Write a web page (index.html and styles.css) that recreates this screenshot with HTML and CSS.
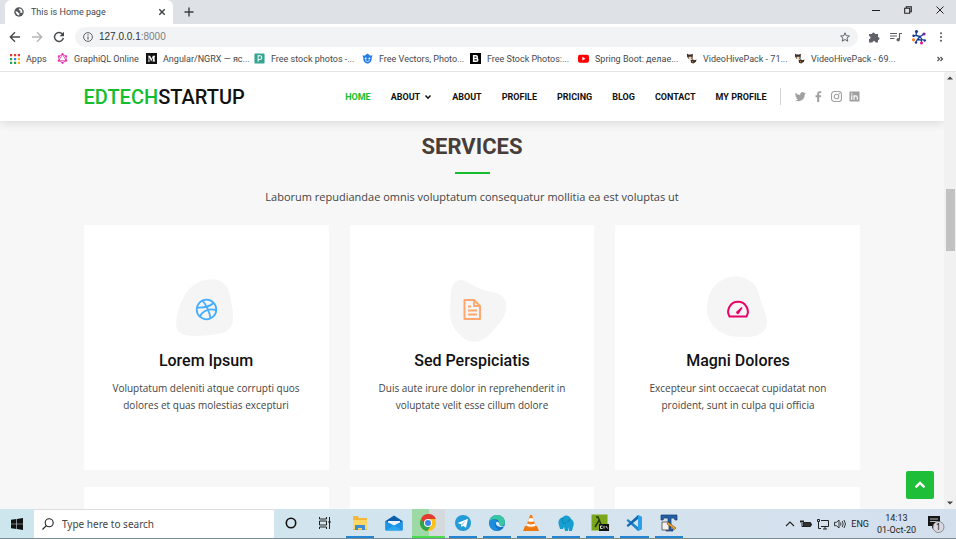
FILE: index.html
```html
<!DOCTYPE html>
<html lang="en">
<head>
<meta charset="utf-8">
<title>This is Home page</title>
<link rel="stylesheet" href="styles.css">
</head>
<body>
<div class="browser">
  <div class="tabstrip">
    <div class="tab">
      <svg class="i10" viewBox="0 0 20 20"><circle cx="10" cy="10" r="9.500" fill="#54585c"/><path d="M3 8l5 2 1 2 2 1-1 4-3-1-3-4zM11 3l-2 3 3 1 1 2-1 2 4 1 1-1-1-5-2-2z" fill="#fff"/></svg>
      <span class="tab-title">This is Home page</span>
      <button class="plain" aria-label="Close tab"><svg class="i8" viewBox="0 0 8 8"><path d="M1.300 1.300l5.400 5.400M6.700 1.300L1.300 6.700" stroke="#3c4043" stroke-width="1.400"/></svg></button>
    </div>
    <button class="plain newtab" aria-label="New tab"><svg class="i10" viewBox="0 0 10 10"><path d="M5 .5v9M.5 5h9" stroke="#3c4043" stroke-width="1.400"/></svg></button>
    <div class="window-buttons">
      <button class="plain" aria-label="Minimize"><svg class="i8" viewBox="0 0 8 8"><path d="M0 4.500h8" stroke="#222"/></svg></button>
      <button class="plain" aria-label="Restore"><svg class="i8" viewBox="0 0 8 8"><path d="M.7 2.300h5v5h-5zM2.300 2V.7h5v5H6" fill="none" stroke="#222" stroke-width="1.100"/></svg></button>
      <button class="plain" aria-label="Close"><svg class="i8" viewBox="0 0 8 8"><path d="M.5.5l7 7M7.500.5l-7 7" stroke="#222"/></svg></button>
    </div>
  </div>
  <div class="toolbar">
    <button class="plain" aria-label="Back"><svg class="i12" viewBox="0 0 12 12"><path d="M11 6H1.500M6 1.300L1.300 6 6 10.700" fill="none" stroke="#45484b" stroke-width="1.400"/></svg></button>
    <button class="plain" aria-label="Forward"><svg class="i12" viewBox="0 0 12 12"><path d="M1 6h9.500M6 1.300L10.700 6 6 10.700" fill="none" stroke="#b4b6b9" stroke-width="1.400"/></svg></button>
    <button class="plain" aria-label="Reload"><svg class="i12" viewBox="0 0 12 12"><path d="M9.800 3.500A4.500 4.500 0 1 0 10.400 7" fill="none" stroke="#45484b" stroke-width="1.400"/><path d="M11 .8v4.400H6.600z" fill="#45484b"/></svg></button>
    <div class="omnibox">
      <svg class="i10" viewBox="0 0 10 10"><circle cx="5" cy="5" r="4.400" fill="none" stroke="#5f6368"/><path d="M5 4.500v3M5 2.300v1.200" stroke="#5f6368" stroke-width="1.200"/></svg>
      <span class="url">127.0.0.1<span class="port">:8000</span></span>
      <button class="plain" aria-label="Bookmark"><svg class="i10" viewBox="0 0 10 10"><path d="M5 .8l1.200 2.900 3.200.3L7 6.100l.8 3.100L5 7.500 2.200 9.200 3 6.100.6 4l3.200-.3z" fill="none" stroke="#505458" stroke-width=".9"/></svg></button>
    </div>
    <div class="extensions">
      <svg class="i12" viewBox="0 0 12 12"><path d="M1 3h3a1.500 1.500 0 1 1 3 0h3v3a1.500 1.500 0 1 1 0 3v2.500H7.500a1.500 1.500 0 0 0-3 0H1V8a1.500 1.500 0 0 0 0-3z" fill="#5f6368"/></svg>
      <svg class="i12" viewBox="0 0 12 12"><path d="M0 2.500h7M0 5h7M0 7.500h4.500M9.500 8.500V2.500H12" fill="none" stroke="#5f6368" stroke-width="1.200"/><circle cx="8.200" cy="8.800" r="1.700" fill="#5f6368"/></svg>
      <svg class="i14" viewBox="0 0 14 14"><path d="M4.500 1.500L4 5.500 1 6M4 5.500l4 1 2.500-1.500 1-1M8 6.500L5.500 9.500 4 12M8 6.500l2 3 3 1M5.500 9.500l4 .5v3" fill="none" stroke="#173c93" stroke-width="1.300"/><g fill="#173c93"><circle cx="4.500" cy="1.500" r="1.600"/><circle cx="1.500" cy="5.800" r="1.200"/><circle cx="12.800" cy="10.500" r="1.200"/><circle cx="4" cy="12.500" r="1.200"/></g><circle cx="12" cy="4" r="1.600" fill="#7527a2"/><circle cx="1.500" cy="9.800" r="1.600" fill="#ff7a1a"/><circle cx="9.500" cy="13" r="1.500" fill="#f0148c"/></svg>
      <svg class="i10" viewBox="0 0 10 10" fill="#505458"><circle cx="5" cy="1.200" r="1"/><circle cx="5" cy="5" r="1"/><circle cx="5" cy="8.800" r="1"/></svg>
    </div>
  </div>
  <nav class="bookmarks">
    <a href="#" class="bm apps"><svg class="i10" viewBox="0 0 10 10"><path d="M0 0h2.200v2.200H0zM4 0h2.200v2.200H4zM7.800 0H10v2.200H7.800z" fill="#e53930"/><path d="M0 4h2.200v2.200H0z" fill="#25a451"/><path d="M4 4h2.200v2.200H4z" fill="#3480ee"/><path d="M7.800 4H10v2.200H7.800zM7.800 7.800H10V10H7.800z" fill="#f9b316"/><path d="M0 7.800h2.200V10H0zM4 7.800h2.200V10H4z" fill="#25a451"/></svg><span>Apps</span></a>
    <a href="#" class="bm first"><svg class="i11" viewBox="0 0 12 12"><path d="M6 1.300l4 2.300v4.800l-4 2.300-4-2.300V3.600zM6 1.300L2 8.400h8z" fill="none" stroke="#e535ab" stroke-width=".9"/><g fill="#e535ab"><circle cx="6" cy="1.300" r="1.200"/><circle cx="10" cy="3.600" r="1.200"/><circle cx="10" cy="8.400" r="1.200"/><circle cx="6" cy="10.700" r="1.200"/><circle cx="2" cy="8.400" r="1.200"/><circle cx="2" cy="3.600" r="1.200"/></g></svg><span>GraphiQL Online</span></a>
    <a href="#" class="bm"><svg class="i11" viewBox="0 0 12 12"><path d="M0 0h12v12H0z" fill="#111"/><path d="M2 3h2.500L6 6.300 7.500 3H10v.7l-.6.5v4l.6.5v.5H7v-.5l.6-.5V5L5.800 9.200 3.600 5v3l.9 1v.3H2V9l.8-1V4z" fill="#fff"/></svg><span>Angular/NGRX — яс...</span></a>
    <a href="#" class="bm"><svg class="i11" viewBox="0 0 12 12"><rect x=".5" y=".5" width="11" height="11" rx="1" fill="#35a593"/><path d="M4.500 9.500V3h2a2 2 0 0 1 0 4h-2" fill="none" stroke="#fff" stroke-width="1.100"/></svg><span>Free stock photos -...</span></a>
    <a href="#" class="bm"><svg class="i11" viewBox="0 0 12 12"><path d="M.5 2.500l2.300.5L6 .5 9.200 3l2.300-.5-1 3C11 9 8.500 11.500 6 11.500S1 9 1.500 5.500z" fill="#247ce8"/><circle cx="4" cy="6" r="1" fill="#fff"/><circle cx="8" cy="6" r="1" fill="#fff"/><path d="M3.500 8.300q2.500 1.800 5 0" fill="none" stroke="#fff" stroke-width=".8"/></svg><span>Free Vectors, Photo...</span></a>
    <a href="#" class="bm"><svg class="i11" viewBox="0 0 12 12"><path d="M0 0h12v12H0z" fill="#000"/><path d="M4 6h2.500a1.500 1.500 0 0 0 0-3H4v6h3a1.500 1.500 0 0 0 0-3" fill="none" stroke="#fff" stroke-width="1.700"/></svg><span>Free Stock Photos:...</span></a>
    <a href="#" class="bm"><svg class="i11" viewBox="0 0 12 12"><rect x="0" y="2" width="12" height="8.500" rx="2" fill="#f00"/><path d="M4.700 4.200v4l3.500-2z" fill="#fff"/></svg><span>Spring Boot: делае...</span></a>
    <a href="#" class="bm"><svg class="i11" viewBox="0 0 12 12"><path d="M1 .5l1.500 1.200h3L7.500.8 7.300 4 7 6.500H3L1.200 4z" fill="#3b2d27"/><path d="M2.800 4.200h3.400L5.800 6.600 4.300 7.500 3 6.200z" fill="#f1d3b4"/><path d="M5 7.500l2.500-.8L9 8l2.500-1-.7 2.500L8 11.500 5.500 10.500z" fill="#3b2d27"/><path d="M6.500 9l1.500 1.200" stroke="#dc962e"/></svg><span>VideoHivePack - 71...</span></a>
    <a href="#" class="bm"><svg class="i11" viewBox="0 0 12 12"><path d="M1 .5l1.500 1.200h3L7.500.8 7.300 4 7 6.500H3L1.200 4z" fill="#3b2d27"/><path d="M2.800 4.200h3.400L5.800 6.600 4.300 7.500 3 6.200z" fill="#f1d3b4"/><path d="M5 7.500l2.500-.8L9 8l2.500-1-.7 2.500L8 11.500 5.500 10.500z" fill="#3b2d27"/><path d="M6.500 9l1.500 1.200" stroke="#dc962e"/></svg><span>VideoHivePack - 69...</span></a>
    <button class="plain more" aria-label="More bookmarks"><svg class="i8" viewBox="0 0 8 8"><path d="M1.500 2L3.500 4 1.500 6M4.500 2L6.500 4 4.500 6" fill="none" stroke="#45484b" stroke-width="1.100"/></svg></button>
  </nav>
</div>

<div class="viewport">
  <div class="page">
    <header class="site-header">
      <div class="container header-row">
        <a href="#" class="logo"><span class="green">EDTECH</span>STARTUP</a>
        <nav class="menu">
          <a href="#" class="green">HOME</a>
          <a href="#" class="drop">ABOUT <svg class="i8" viewBox="0 0 8 8"><path d="M1.500 2.500L4 5.200l2.500-2.700" fill="none" stroke="#111" stroke-width="1.500"/></svg></a>
          <a href="#">ABOUT</a>
          <a href="#">PROFILE</a>
          <a href="#">PRICING</a>
          <a href="#">BLOG</a>
          <a href="#">CONTACT</a>
          <a href="#">MY PROFILE</a>
        </nav>
        <div class="social">
          <a href="#" aria-label="Twitter"><svg class="i11" viewBox="0 0 24 24"><path d="M23.600 4.900a9.700 9.700 0 0 1-2.800.8 4.900 4.900 0 0 0 2.100-2.700 9.700 9.700 0 0 1-3.100 1.200 4.900 4.900 0 0 0-8.400 4.500A13.900 13.900 0 0 1 1.300 3.600a4.900 4.900 0 0 0 1.500 6.500 4.900 4.900 0 0 1-2.200-.6 4.900 4.900 0 0 0 3.900 4.900 4.900 4.900 0 0 1-2.200.1 4.900 4.900 0 0 0 4.600 3.400A9.800 9.800 0 0 1 0 19.900a13.800 13.800 0 0 0 21.200-12.300 10 10 0 0 0 2.400-2.700z" fill="#a0a0a0"/></svg></a>
          <a href="#" aria-label="Facebook"><svg class="i11" viewBox="0 0 24 24"><path d="M9 24V13.500H5.500v-4H9V6.300C9 2.500 11.300.5 14.600.5c1.500 0 2.900.2 3.400.3v3.800h-2.300c-1.800 0-2.200.9-2.200 2.200v2.700h4.200l-.6 4h-3.600V24z" fill="#a0a0a0"/></svg></a>
          <a href="#" aria-label="Instagram"><svg class="i11" viewBox="0 0 24 24"><rect x="1.200" y="1.200" width="21.600" height="21.600" rx="6" fill="none" stroke="#a0a0a0" stroke-width="2.400"/><circle cx="12" cy="12" r="5" fill="none" stroke="#a0a0a0" stroke-width="2.400"/><circle cx="18.200" cy="5.800" r="1.500" fill="#a0a0a0"/></svg></a>
          <a href="#" aria-label="LinkedIn"><svg class="i11" viewBox="0 0 24 24"><rect x="1" y="1" width="22" height="22" rx="2" fill="#a0a0a0"/><path d="M6 9.500V19M6 5v2.500M11 19V9.500M11 14c0-4.500 7-4.500 7 0v5" fill="none" stroke="#fff" stroke-width="2.600"/></svg></a>
        </div>
      </div>
    </header>
    <main class="container services">
      <h2>SERVICES</h2>
      <p class="lead">Laborum repudiandae omnis voluptatum consequatur mollitia ea est voluptas ut</p>
      <div class="cards">
        <article class="card">
          <svg class="blob" viewBox="1 0 90 80"><path d="M39 12C50 7 65 8 69 22c2 12 5 18 4 28-1 11-10 14-22 15-12 1-24 2-31-2-6-5-4-15-1-25 4-11 9-21 20-26z" fill="#f5f5f5"/><g fill="none" stroke="#47aeff" stroke-width="1.800"><circle cx="46.500" cy="39.500" r="9.800"/><path d="M42.500 30.500c4 5 7 11 8 18M37 37.500c7 .5 13-1 17-5M40 46.500c3-6 9-8 16-6.500"/></g></svg>
          <h3>Lorem Ipsum</h3>
          <p>Voluptatum deleniti atque corrupti quos dolores et quas molestias excepturi</p>
        </article>
        <article class="card">
          <svg class="blob" viewBox="-3 0 90 80"><path d="M22 17c3-8 10-9 17-4 8 5 14 7 23 9 12 2 16 9 14 19-3 10-9 15-16 23-8 9-20 11-29 2-9-8-12-18-11-28 1-9 0-14 2-21z" fill="#f5f5f5"/><g fill="none" stroke="#ffa76e" stroke-width="2"><path d="M34.500 30h9.500l6 6v13H34.500z" stroke-linejoin="round"/><path d="M44 30v6h6M38 36.500h3M38 40.500h9M38 44.500h9" stroke-width="1.800"/></g></svg>
          <h3>Sed Perspiciatis</h3>
          <p>Duis aute irure dolor in reprehenderit in voluptate velit esse cillum dolore</p>
        </article>
        <article class="card">
          <svg class="blob" viewBox="-2 0 90 80"><path d="M35 7c13-2 26 4 29 17 2 11 8 19 8 28 0 11-10 16-25 15-16 0-28-6-33-18-5-13-1-37 21-42z" fill="#f5f5f5"/><path d="M34.500 46.500a9.800 9.800 0 1 1 17 0z" fill="none" stroke="#e80368" stroke-width="2" stroke-linejoin="round"/><path d="M41.500 41.500l5-4.500 1 1-3.500 5.500a1.500 1.500 0 0 1-2.500-2z" fill="#e80368"/></svg>
          <h3>Magni Dolores</h3>
          <p>Excepteur sint occaecat cupidatat non proident, sunt in culpa qui officia</p>
        </article>
        <article class="card"></article>
        <article class="card"></article>
        <article class="card"></article>
      </div>
    </main>
    <button class="back-top" aria-label="Back to top"><svg class="i12" viewBox="0 0 12 12"><path d="M1.500 8.300L6 4l4.500 4.300" fill="none" stroke="#fff" stroke-width="2.400"/></svg></button>
  </div>
  <div class="scrollbar">
    <svg class="i8" viewBox="0 0 8 8"><path d="M1 5.500L4 2.500l3 3z" fill="#444"/></svg>
    <div class="track"><div class="thumb"></div></div>
    <svg class="i8" viewBox="0 0 8 8"><path d="M1 2.500l3 3 3-3z" fill="#444"/></svg>
  </div>
</div>

<footer class="taskbar">
  <button class="plain start" aria-label="Start"><svg class="i12" viewBox="0 0 12 12"><path d="M0 1.800l5.400-.8v4.700H0zM6 .9L12 0v5.700H6zM0 6.300h5.400V11L0 10.200zM6 6.300h6V12l-6-.9z" fill="#111"/></svg></button>
  <label class="search">
    <svg class="i12" viewBox="0 0 12 12"><circle cx="7.200" cy="4.800" r="4" fill="none" stroke="#222" stroke-width="1.100"/><path d="M4.300 7.700L.5 11.500" stroke="#222" stroke-width="1.200"/></svg>
    <input type="text" placeholder="Type here to search" aria-label="Type here to search">
  </label>
  <div class="tasks">
    <button class="task" aria-label="Cortana"><svg viewBox="0 0 18 18"><circle cx="9" cy="9" r="4.700" fill="none" stroke="#111" stroke-width="1.600"/></svg></button>
    <button class="task" aria-label="Task View"><svg viewBox="0 0 18 18"><path d="M3.500 3v2h7V3M3.500 15v-2h7v2M3.500 7h7v4h-7zM13.500 3v12" fill="none" stroke="#222"/><path d="M12.500 7h2v2h-2z" fill="#222"/></svg></button>
    <button class="task open" aria-label="File Explorer"><svg viewBox="0 0 18 18"><path d="M2 2h5l1 2h8v12H2z" fill="#f3b83a"/><path d="M2 6h14v9H2z" fill="#ffd766"/><path d="M4 16v-5h10v5h-3v-2H7v2z" fill="#3d8fd1"/></svg></button>
    <button class="task" aria-label="Mail"><svg viewBox="0 0 18 18"><path d="M.5 7L9 1.500 17.500 7v9H.5z" fill="#0d5fae"/><path d="M3 7h12v2l-6 3-6-3z" fill="#eef7ff"/><path d="M.5 7L9 11.500 17.500 7v9.500H.5z" fill="#1b95e6"/><path d="M.5 16.500L9 11.500l8.500 5z" fill="#2ea6ee"/></svg></button>
    <button class="task open active" aria-label="Chrome"><svg viewBox="0 0 18 18"><circle cx="9" cy="9" r="8" fill="#fbc116"/><path d="M2 5a8 8 0 0 1 14.900 0H9L5.500 11z" fill="#e33b2e"/><path d="M2 5a8 8 0 0 0 6.400 12l4-6.200L6 11z" fill="#2da44e"/><circle cx="9" cy="9" r="4" fill="#fff"/><circle cx="9" cy="9" r="3" fill="#3d83ec"/></svg></button>
    <button class="task open" aria-label="Telegram"><svg viewBox="0 0 18 18"><circle cx="9" cy="9" r="8" fill="#239bd7"/><path d="M3.500 9L14 4.800l-2 9-3-2-1.600 1.500-.4-3z" fill="#fff"/><path d="M7 10.300l5-3.800-3.600 4.600z" fill="#91c9e9"/></svg></button>
    <button class="task open" aria-label="Edge"><svg viewBox="0 0 18 18"><circle cx="9" cy="9" r="8" fill="#1373c9"/><path d="M1 8C2 3 6 1 9 1c5 0 8 3.500 8 7 0 2.500-2 4-4 4-2.500 0-3-1-2-2.500C12 6 6 3 1 8z" fill="#3bc6a3"/><path d="M1 8c4-5 8-2 7.500 0C6 10 7 15 12 16 5 19 1 13 1 8z" fill="#1c8dde"/><path d="M8.500 8C7 10 9 13.500 15.500 13L17 12c-2 1-6 .5-6-2.500 0-1-1-2-2.500-1.500z" fill="#dceefa"/></svg></button>
    <button class="task open" aria-label="VLC"><svg viewBox="0 0 18 18"><path d="M3 12h12l2 5H1z" fill="#ee7910"/><path d="M8 1h2l4 12q-5 2.500-10 0z" fill="#f58020"/><path d="M7 4.200h4l1 3q-3 1.300-6 0zM5.200 9.800q4 1.500 7.600 0l.7 2q-4.500 2-9 0z" fill="#fff"/></svg></button>
    <button class="task open" aria-label="Elephant"><svg viewBox="0 0 18 18"><path d="M1.500 10C1 5 4 4 6 3c3-3 7-1 8 2 3 2 3.500 5 2 8l-1 4h-3v-4l-1 4H8l-1-4-1 2H3z" fill="#189fd2"/><path d="M6 4c-2 4 1 6 3 5M13 5q-1 3-3 3" fill="none" stroke="#0876a8" stroke-width=".8"/></svg></button>
    <button class="task open" aria-label="Cmder"><svg viewBox="0 0 18 18"><path d="M.5.5h16v16H.5z" fill="#79a719"/><path d="M5 3h2l4 10M8 6.500L4 13" fill="none" stroke="#26380b" stroke-width="1.500"/><path d="M8 10h10v7H8z" fill="#111"/><path d="M11.500 12h-2v2.500h2M13 12v2.500M15 12l1.500 2.500" fill="none" stroke="#eee" stroke-width=".9"/></svg></button>
    <button class="task open" aria-label="VS Code"><svg viewBox="0 0 18 18"><path d="M13 1l4 2v12l-4 2L1.500 6.500 3 5l10 8z" fill="#1f86ca"/><path d="M13 1L1.500 11.500 3 13l10-8z" fill="#1269ad"/><path d="M13 1l4 2v12l-4 2z" fill="#2ba0ea"/></svg></button>
    <button class="task open" aria-label="Text tool"><svg viewBox="0 0 18 18"><path d="M1 1h16v5h-2l-1-2h-3v11h2v2H6v-2h2V4H4L3 6H1z" fill="#2460a9" stroke="#163a6c" stroke-width=".7"/><path d="M2 8h7v8H2z" fill="#f3f3f3" stroke="#444" stroke-width=".8"/><path d="M8 8l8 6-1.500 1.500L7 10z" fill="#f4a522" stroke="#333" stroke-width=".5"/></svg></button>
  </div>
  <div class="tray">
    <svg class="i10" viewBox="0 0 10 10"><path d="M1 7l4-4 4 4" fill="none" stroke="#222" stroke-width="1.100"/></svg>
    <svg class="i12" viewBox="0 0 12 12"><path d="M3.500 4.500h7v4h-7z" fill="#333" stroke="#222"/><path d="M11 5.500h1v2h-1z" fill="#222"/><path d="M0 3.500h4M1 2v3M3 2v3M2 5v3.500h2" stroke="#222" fill="none"/></svg>
    <svg class="i12" viewBox="0 0 12 12"><path d="M4 2.500h7.500v6H4M6 11h4M8 8.500V11M1.500 4v6.500H4M.5 1.500h2v2h-2z" fill="none" stroke="#222"/></svg>
    <svg class="i12" viewBox="0 0 12 12"><path d="M.5 4.300h2L5 2v8L2.500 7.700h-2zM6.500 4.500q1 1.500 0 3M8.200 3q2 3 0 6M10 2q3 4 0 8" fill="none" stroke="#222" stroke-width=".9"/></svg>
    <span>ENG</span>
    <span class="clock"><span>14:13</span><span>01-Oct-20</span></span>
    <svg class="notice" viewBox="0 0 20 20"><path d="M2 2h12v10H8l-2 3v-3H2z" fill="#161616"/><path d="M4 5h8M4 7.500h8" stroke="#dce6ee" stroke-width=".8"/><circle cx="12.500" cy="13" r="5.500" fill="#d6dade" stroke="#777" stroke-width=".8"/><text x="10" y="16">1</text></svg>
  </div>
</footer>
</body>
</html>
```
FILE: styles.css
```css
* { box-sizing: border-box; }
body {
  margin: 0;
  height: 100vh;
  display: flex;
  flex-direction: column;
  overflow: hidden;
  font-family: "Open Sans", "Noto Sans", sans-serif;
  color: #444;
}
a { color: inherit; text-decoration: none; }
svg { display: block; flex: none; overflow: visible; }
.i8 { width: 8px; height: 8px; }
.i10 { width: 10px; height: 10px; }
.i11 { width: 11px; height: 11px; }
.i12 { width: 12px; height: 12px; }
.i14 { width: 14px; height: 14px; }
.plain { border: 0; padding: 0; background: none; display: flex; align-items: center; justify-content: center; }

/* browser frame */
.browser { flex: none; font-family: Roboto, "Noto Sans", sans-serif; font-size: 9px; line-height: 12px; background: #fff; border-bottom: 1px solid #e3e4e5; }
.tabstrip { display: flex; align-items: center; height: 24px; padding-left: 5px; background: #dee1e6; }
.tab { display: flex; align-items: center; gap: 7px; width: 168px; height: 24px; padding: 0 7px 0 9px; background: #fff; border-radius: 6px 6px 0 0; }
.tab-title { flex: 1; color: #45484b; }
.newtab { margin-left: 11px; }
.window-buttons { display: flex; gap: 24px; margin-left: auto; padding: 0 12px 4px 0; }
.toolbar { display: flex; align-items: center; gap: 10px; height: 24px; padding: 1px 10px 0 9px; }
.omnibox { flex: 1; display: flex; align-items: center; gap: 6px; height: 20px; padding: 0 8px; border-radius: 10px; background: #f1f3f4; }
.url { flex: 1; font: 10px/12px "Liberation Sans", sans-serif; color: #303336; }
.port { color: #7c8084; }
.extensions { display: flex; align-items: center; gap: 10px; }
.bookmarks { display: flex; align-items: center; height: 23px; padding: 0 12px 2px 10px; color: #45484b; }
.bm { display: flex; align-items: center; gap: 6px; flex: 0 1 108px; white-space: nowrap; }
.apps { flex-basis: 47px; }
.first { flex-basis: 89px; }
.more { margin-left: auto; }

/* web page */
.viewport { flex: 1; min-height: 0; display: flex; }
.page { position: relative; flex: 1; overflow: hidden; background: #f7f7f7; }
.container { width: 82.3%; margin: 0 auto; }
.green { color: #16bd2e; }
.site-header { position: relative; background: #fff; box-shadow: 0 1px 10px rgba(0, 0, 0, .15); font-family: Roboto, sans-serif; }
.header-row { display: flex; align-items: center; height: 49px; color: #111; }
.logo { flex: 1; font-size: 20px; font-weight: 500; }
.menu { display: flex; gap: 20px; font-size: 9px; font-weight: 700; }
.drop { display: flex; align-items: center; gap: 4px; }
.social { display: flex; align-items: center; gap: 7px; height: 17px; margin-left: 14px; padding-left: 14px; border-left: 1px solid #d5d5d5; }
.services { text-align: center; }
.services h2 { margin: 11px 0 0; font: 700 22px/30px Roboto, sans-serif; color: #473d39; }
.services h2::after { content: ""; display: block; width: 35px; height: 2px; margin: 10px auto 0; background: #16bd2e; }
.lead { margin: 13px 0 18px; font-size: 11px; line-height: 20px; }
.cards { display: grid; grid-template-columns: repeat(3, 1fr); gap: 17px 21px; }
.card { display: flex; flex-direction: column; align-items: center; aspect-ratio: 1; padding: 45px 26px 0; background: #fff; }
.blob { width: 90px; height: 80px; }
.card h3 { margin: 1px 0 9px; font: 500 16px/20px Roboto, sans-serif; color: #111; }
.card p { margin: 0; font-size: 10px; line-height: 17px; }
.back-top { position: absolute; right: 10px; bottom: 10px; display: grid; place-items: center; width: 28px; height: 28px; padding: 0; border: 0; border-radius: 2px; background: #1fbe38; }
.scrollbar { width: 12px; display: flex; flex-direction: column; align-items: center; padding: 2px 0; background: #f1f1f1; }
.track { flex: 1; width: 9px; padding-top: 107px; }
.thumb { height: 62px; background: #c1c1c1; }

/* taskbar */
.taskbar { flex: none; display: flex; height: 30px; background: linear-gradient(90deg, #cde6ed, #d5e4ef 60%, #d4dfed); border-bottom: 1px solid #7b8d94; font-family: Roboto, "Noto Sans", sans-serif; font-size: 9px; color: #222; }
.start { width: 34px; }
.search { display: flex; align-items: center; gap: 8px; width: 240px; padding-left: 8px; background: #fff; border-top: 1px solid #ddd; }
.search input { flex: 1; min-width: 0; border: 0; padding: 0; outline: 0; background: none; font: 10px "Noto Sans", sans-serif; }
.search input::placeholder { color: #444; }
.tasks { display: grid; grid-template-columns: repeat(12, 1fr); width: 412px; }
.task { display: grid; place-items: center; margin: 0 3px; padding: 0; border: 0; border-bottom: 2px solid transparent; background: none; }
.task svg { width: 18px; height: 18px; }
.open { border-color: #2384d1; }
.active { margin: 0 1px; background: linear-gradient(90deg, #9dd9a5 50%, #d5dadd 50%); border-color: #49dc4d; }
.tray { display: flex; align-items: center; gap: 5px; margin-left: auto; padding-right: 10px; }
.clock { display: flex; flex-direction: column; align-items: center; line-height: 12px; margin: 0 5px 0 3px; }
.notice { width: 20px; height: 20px; }
.notice text { font: 8px "Noto Sans", sans-serif; }
```
